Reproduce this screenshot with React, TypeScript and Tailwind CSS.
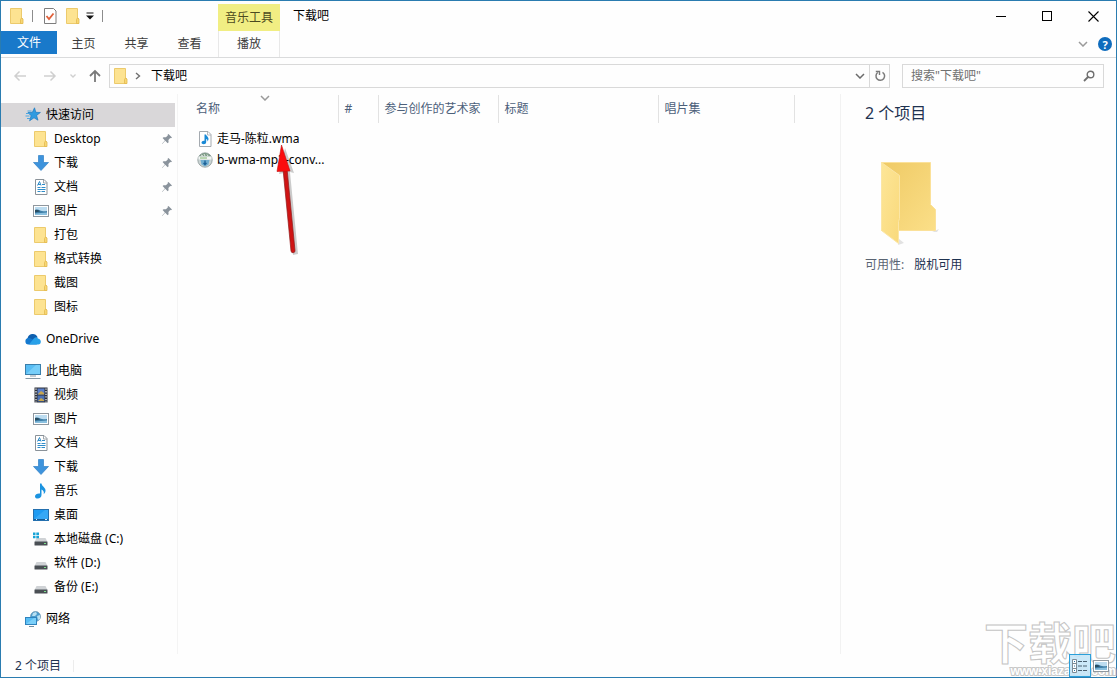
import type { ReactNode } from "react";
import { clsx } from "clsx";

type IconProps = { className?: string };

function FolderIcon({ className }: IconProps) {
  return (
    <svg viewBox="0 0 16 16" className={clsx("size-4 shrink-0", className)} aria-hidden="true">
      <path d="M1.500.5h11v10h1v5h-12z" fill="#fde391" stroke="#ecca6c" />
      <path d="M11.500 15.500v-4l1-1.500 1.500 1v4.500z" fill="#f7d774" stroke="#e3b94f" strokeWidth=".8" />
    </svg>
  );
}

function StarIcon() {
  return (
    <svg viewBox="0 0 16 16" className="size-4 shrink-0" aria-hidden="true">
      <path
        d="M9.500.8l1.300 4.500 4.600.2-3.800 2.900 1.400 4.800-4-2.400-4.400 3 1.500-5L3 5.500l4.400-.2z"
        fill="#2f9be0"
        stroke="#1b7ac2"
        strokeWidth=".7"
      />
      <path d="M2.500 4h4M1 6.500h4M.5 9h4M2 11.500h3" stroke="#3fa2e2" strokeWidth=".9" />
    </svg>
  );
}

function DownloadIcon() {
  return (
    <svg viewBox="0 0 16 16" className="size-4 shrink-0" aria-hidden="true">
      <path d="M5.500.5h5v7h5L8 15.500.5 7.500h5z" fill="#3d93dc" stroke="#2f7fc6" strokeWidth=".7" />
    </svg>
  );
}

function DocumentIcon() {
  return (
    <svg viewBox="0 0 16 16" className="size-4 shrink-0" aria-hidden="true">
      <path d="M2.500.5h8.500l3 3v12H2.500z" fill="#fff" stroke="#8a9299" />
      <path d="M10.500.5v3.500H14" fill="none" stroke="#8a9299" strokeWidth=".8" />
      <path
        d="M4.500 6.500l2-4 1.500 4M5 5.500h3M9 5.500h3M4.500 8.500h3M8.500 8.500h4M4.500 10.500h8M4.500 12.500h3M8.500 12.500h3.500"
        fill="none"
        stroke="#2f8cc9"
      />
    </svg>
  );
}

function PictureIcon() {
  return (
    <svg viewBox="0 0 16 16" className="size-4 shrink-0" aria-hidden="true">
      <rect x=".5" y="2.500" width="15" height="11" fill="#fff" stroke="#8f979e" />
      <rect x="2" y="4" width="12" height="8" fill="#bcdcf0" />
      <path d="M2 7c3-1.500 5 .5 7 1s3 .3 5 0v4H2z" fill="#3f7fa8" />
      <path d="M2 7c2-.8 4 .2 5 1.500L2 9.500z" fill="#284d62" />
      <path d="M2 10.500l12-1V12H2z" fill="#8ac0df" />
    </svg>
  );
}

function OneDriveIcon() {
  return (
    <svg viewBox="0 0 16 16" className="size-4 shrink-0" aria-hidden="true">
      <path d="M2.500 7.500A5.300 5.300 0 0 1 12.500 6l-2 5h-8z" fill="#0f5fae" />
      <path d="M3.300 13.500A3.300 3.300 0 0 1 3 7c1.700-.2 3.500.5 5 1.600l4 4.900z" fill="#1479cf" />
      <path d="M8 8.600C9 6.500 11.500 5 13 7.500c4 .7 3.500 6 .2 6H4z" fill="#28a0e8" />
    </svg>
  );
}

function ComputerIcon() {
  return (
    <svg viewBox="0 0 16 16" className="size-4 shrink-0" aria-hidden="true">
      <rect x=".5" y="1.500" width="15" height="10" fill="#58bdf4" stroke="#3a7eaa" />
      <path d="M1 11L11 2h4v9z" fill="#8bd8fb" opacity=".6" />
      <path d="M5 13h6" stroke="#8b9ba5" />
      <path d="M.5 15.500h15" stroke="#8599a6" />
    </svg>
  );
}

function VideoIcon() {
  return (
    <svg viewBox="0 0 16 16" className="size-4 shrink-0" aria-hidden="true">
      <rect x="1.500" y=".5" width="13" height="15" fill="#2b2f38" />
      <rect x="4.500" y="1.500" width="7" height="6" fill="#5a7fc9" />
      <rect x="4.500" y="8.500" width="7" height="6" fill="#4a70b5" />
      <path d="M5 7l3-3 3 2v1.500H5zM5 14l3-3 3 2v1H5z" fill="#c8a64d" />
      <path d="M3 1.500v14M13 1.500v14" stroke="#e8ebef" strokeWidth="1.300" strokeDasharray="1.300 1.300" />
    </svg>
  );
}

function MusicIcon() {
  return (
    <svg viewBox="0 0 16 16" className="size-4 shrink-0" aria-hidden="true">
      <path
        d="M7 .5h1.500c.3 3 4.500 4 4 7.500-.2 1.500-1 2.500-1.800 3.200.6-2.500-.4-4-2.200-4.700V12c0 2-1.800 3.500-3.700 3.500S2 14.600 2 13.200C2 11.500 4.500 10 7 10.500z"
        fill="#1b93e0"
      />
    </svg>
  );
}

function DesktopIcon() {
  return (
    <svg viewBox="0 0 16 16" className="size-4 shrink-0" aria-hidden="true">
      <rect x=".5" y="2.500" width="15" height="11" fill="#1e9bf2" stroke="#236fae" />
      <path d="M1 12L12 3h3v9z" fill="#46b1f8" opacity=".6" />
      <path d="M1 12.500h14" stroke="#155b96" />
      <path d="M3 12.500h1M12 12.500h2" stroke="#d7ecfb" />
    </svg>
  );
}

function DriveIcon({ system = false }: { system?: boolean }) {
  return (
    <svg viewBox="0 0 16 16" className="size-4 shrink-0" aria-hidden="true">
      <path d="M3.500 7h9l2 4H1.500z" fill="#cfd2d5" />
      <rect x="1.500" y="10.500" width="13" height="4" rx=".5" fill="#4a4f54" />
      <path d="M2 10.500h12" stroke="#8d9297" strokeWidth=".7" />
      <rect x="11" y="12" width="2" height="1" fill="#7be08a" />
      {system && (
        <path d="M0 1.500h2.500V4H0zM3.300 1.500H6V4H3.300zM0 4.800h2.500v2.500H0zM3.300 4.800H6v2.500H3.300z" fill="#17a3d6" />
      )}
    </svg>
  );
}

function NetworkIcon() {
  return (
    <svg viewBox="0 0 16 16" className="size-4 shrink-0" aria-hidden="true">
      <circle cx="10.500" cy="5.500" r="5" fill="#4c9ccc" stroke="#6d94ad" strokeWidth=".7" />
      <path d="M8 2l3-1 1 2-2 2-3 0zM12 5l3-1v4l-2 1z" fill="#b9e0f2" />
      <rect x=".5" y="6.500" width="11" height="7" fill="#58bdf4" stroke="#2f83bd" />
      <path d="M1 13l8-6h2v6z" fill="#91dafb" opacity=".6" />
      <path d="M4 15.500h5" stroke="#6f8da0" />
    </svg>
  );
}

function PinIcon() {
  return (
    <svg viewBox="0 0 12 12" className="ml-auto size-3 shrink-0" aria-hidden="true">
      <path
        d="M7.500 1L11 4.500l-1 .8-.8-.2-1.800 1.900.2 2.300-.9.9-2.500-2.400L1.500 10.800l-.6.3.3-.7 2.700-2.900L1.600 5l.9-.8 2.400.1 1.900-1.800-.2-.8z"
        fill="#8a939c"
      />
    </svg>
  );
}

function AudioFileIcon() {
  return (
    <svg viewBox="0 0 16 16" className="size-4 shrink-0" aria-hidden="true">
      <path d="M2.500.5h8.500l3 3v12H2.500z" fill="#fff" stroke="#a4aab0" />
      <path d="M10.500.5v3.500H14" fill="none" stroke="#a4aab0" strokeWidth=".8" />
      <path
        d="M7.500 3.500H9c.2 1.700 2.800 2.300 2.500 4.800-.1.900-.6 1.700-1.100 2.100.2-1.300-.2-2-1.200-2.400v3c0 1.300-1.200 2.300-2.500 2.300s-2.200-.7-2.200-1.700c0-1.200 1.500-2.100 3-1.800z"
        fill="#1889d6"
      />
    </svg>
  );
}

function InstallerIcon() {
  return (
    <svg viewBox="0 0 16 16" className="size-4 shrink-0" aria-hidden="true">
      <circle cx="8" cy="8" r="7.200" fill="#c9d3d3" stroke="#8b9898" strokeWidth=".8" />
      <path d="M2 4.500A7 7 0 0 1 14 4.500z" fill="#7c9a86" />
      <path d="M4 3l2 1M7 2l1 2M10 2.500l1 1.500" stroke="#e5ece4" />
      <rect x="1.500" y="4.500" width="13" height="3" fill="#f2f5f3" />
      <path d="M3 6h7" stroke="#7eb56e" />
      <path d="M3.500 8h9l-1 4.500-3.500 2-3.500-2z" fill="#70add0" />
      <path d="M8 8.500v4M6.500 11L8 12.500 9.500 11" fill="none" stroke="#1a5f96" strokeWidth="1.300" />
    </svg>
  );
}

function Chevron({ className }: IconProps) {
  return (
    <svg viewBox="0 0 10 6" className={clsx("h-1.5 w-2.5 shrink-0", className)} aria-hidden="true">
      <path d="M1 1l4 4 4-4" fill="none" stroke="currentColor" strokeWidth="1.500" />
    </svg>
  );
}

type NavItem = { label: string; icon: ReactNode; pinned?: boolean };
type NavGroup = { label: string; icon: ReactNode; active?: boolean; items: NavItem[] };

const NAV: NavGroup[] = [
  {
    label: "快速访问",
    icon: <StarIcon />,
    active: true,
    items: [
      { label: "Desktop", icon: <FolderIcon />, pinned: true },
      { label: "下载", icon: <DownloadIcon />, pinned: true },
      { label: "文档", icon: <DocumentIcon />, pinned: true },
      { label: "图片", icon: <PictureIcon />, pinned: true },
      { label: "打包", icon: <FolderIcon /> },
      { label: "格式转换", icon: <FolderIcon /> },
      { label: "截图", icon: <FolderIcon /> },
      { label: "图标", icon: <FolderIcon /> },
    ],
  },
  { label: "OneDrive", icon: <OneDriveIcon />, items: [] },
  {
    label: "此电脑",
    icon: <ComputerIcon />,
    items: [
      { label: "视频", icon: <VideoIcon /> },
      { label: "图片", icon: <PictureIcon /> },
      { label: "文档", icon: <DocumentIcon /> },
      { label: "下载", icon: <DownloadIcon /> },
      { label: "音乐", icon: <MusicIcon /> },
      { label: "桌面", icon: <DesktopIcon /> },
      { label: "本地磁盘 (C:)", icon: <DriveIcon system /> },
      { label: "软件 (D:)", icon: <DriveIcon /> },
      { label: "备份 (E:)", icon: <DriveIcon /> },
    ],
  },
  { label: "网络", icon: <NetworkIcon />, items: [] },
];

const COLUMNS = [
  { label: "名称", width: "w-[148px]" },
  { label: "#", width: "w-10" },
  { label: "参与创作的艺术家", width: "w-[120px]" },
  { label: "标题", width: "w-40" },
  { label: "唱片集", width: "w-[136px]" },
];

const FILES = [
  { name: "走马-陈粒.wma", icon: <AudioFileIcon /> },
  { name: "b-wma-mp3-conv...", icon: <InstallerIcon /> },
];

function TitleBar() {
  return (
    <div className="flex h-[30px]">
      <div className="flex w-[217px] items-center pl-2">
        <FolderIcon />
        <span className="ml-[7px] h-3 w-px bg-[#8c8c8c]" />
        <button aria-label="属性" className="ml-2.5">
          <svg viewBox="0 0 14 16" className="h-4 w-3.5" aria-hidden="true">
            <path d="M1.500.5h9l2.500 2.500v12.500H1.500z" fill="#fff" stroke="#7d7d7d" />
            <path d="M3.500 8l2.500 3 4.500-5.500" fill="none" stroke="#e0603a" strokeWidth="1.800" />
          </svg>
        </button>
        <button aria-label="新建文件夹" className="ml-2">
          <FolderIcon />
        </button>
        <button aria-label="自定义快速访问工具栏" className="ml-[5px]">
          <svg viewBox="0 0 8 8" className="size-2" aria-hidden="true">
            <path d="M.5 1h7" stroke="#111" />
            <path d="M0 3.500h8L4 7.500z" fill="#111" />
          </svg>
        </button>
        <span className="ml-2 h-3 w-px bg-[#8c8c8c]" />
      </div>
      <div className="mt-[3px] w-[62px] bg-[#f1ee83] text-center leading-7 text-[#4c4a20]">音乐工具</div>
      <h1 className="ml-[13px] leading-[30px]">下载吧</h1>
      <div className="ml-auto flex">
        <button aria-label="最小化" className="grid w-[46px] place-items-center">
          <span className="h-px w-2.5 bg-black" />
        </button>
        <button aria-label="最大化" className="grid w-[46px] place-items-center">
          <span className="size-2.5 border border-black" />
        </button>
        <button aria-label="关闭" className="grid w-[46px] place-items-center">
          <svg viewBox="0 0 11 11" className="size-[11px]" aria-hidden="true">
            <path d="M.5.5l10 10M10.500.5l-10 10" stroke="#000" strokeWidth="1.100" />
          </svg>
        </button>
      </div>
    </div>
  );
}

function RibbonTabs() {
  return (
    <div className="flex h-[27px] items-start border-b border-[#dadbdc] text-[#3c3c3c]">
      <button className="h-[23px] w-14 bg-[#1979ca] text-white">文件</button>
      {["主页", "共享", "查看"].map((tab) => (
        <button key={tab} className="h-[26px] w-[53px]">
          {tab}
        </button>
      ))}
      <button className="ml-0.5 h-[26px] w-[62px] border-x border-[#e8e8e8]">播放</button>
      <div className="ml-auto flex h-[26px] items-center gap-2.5 pr-1">
        <button aria-label="展开功能区" className="text-[#9a9a9a]">
          <Chevron />
        </button>
        <button
          aria-label="帮助"
          className="grid size-3.5 place-items-center rounded-full bg-[#0f6cbd] text-[11px] leading-none font-bold text-white"
        >
          ?
        </button>
      </div>
    </div>
  );
}

function AddressBar() {
  return (
    <div className="flex items-center px-3 py-1.5">
      <button aria-label="后退" className="text-[#cfcfcf]">
        <svg viewBox="0 0 14 12" className="h-3 w-3.5" aria-hidden="true">
          <path d="M13 6H2M6.500 1.500L2 6l4.500 4.500" fill="none" stroke="currentColor" strokeWidth="1.500" />
        </svg>
      </button>
      <button aria-label="前进" className="ml-4 text-[#cfcfcf]">
        <svg viewBox="0 0 14 12" className="h-3 w-3.5" aria-hidden="true">
          <path d="M1 6h11M7.500 1.500L12 6l-4.500 4.500" fill="none" stroke="currentColor" strokeWidth="1.500" />
        </svg>
      </button>
      <button aria-label="最近浏览的位置" className="ml-3 text-[#cfcfcf]">
        <svg viewBox="0 0 8 6" className="h-1.5 w-2" aria-hidden="true">
          <path d="M1.500 1.500L4 4l2.500-2.500" fill="none" stroke="currentColor" strokeWidth="1.300" />
        </svg>
      </button>
      <button aria-label="上移" className="ml-3 text-[#7a7a7a]">
        <svg viewBox="0 0 12 14" className="h-3.5 w-3" aria-hidden="true">
          <path d="M6 13V2M1 7l5-5 5 5" fill="none" stroke="currentColor" strokeWidth="1.800" />
        </svg>
      </button>
      <div className="ml-2 flex h-6 min-w-0 flex-1 items-center border border-[#d9d9d9]">
        <FolderIcon className="ml-[3px]" />
        <svg viewBox="0 0 6 8" className="ml-1.5 h-2 w-1.5" aria-hidden="true">
          <path d="M1 1l3.500 3L1 7" fill="none" stroke="#6f6f6f" strokeWidth="1.400" />
        </svg>
        <button className="ml-2.5">下载吧</button>
        <button aria-label="以前的位置" className="mr-1 ml-auto text-[#6b6b6b]">
          <Chevron />
        </button>
        <button aria-label="刷新" className="grid h-full w-5 place-items-center border-l border-[#d9d9d9]">
          <svg viewBox="0 0 12 12" className="size-3" aria-hidden="true">
            <path d="M8.500 2.300A4.300 4.300 0 1 1 3.800 2.500" fill="none" stroke="#7b7b7b" strokeWidth="1.500" />
            <path d="M1.800 1.500h3.700V5" fill="none" stroke="#7b7b7b" strokeWidth="1.400" />
          </svg>
        </button>
      </div>
      <div className="ml-3 flex h-6 w-[202px] items-center border border-[#d9d9d9] px-2">
        <input
          type="text"
          aria-label="搜索"
          placeholder={'搜索"下载吧"'}
          className="min-w-0 flex-1 outline-none placeholder:text-[#707070]"
        />
        <svg viewBox="0 0 12 12" className="size-3" aria-hidden="true">
          <circle cx="7.500" cy="4.500" r="3.300" fill="none" stroke="#6f6f6f" strokeWidth="1.400" />
          <path d="M5 7L1 11" stroke="#6f6f6f" strokeWidth="1.800" />
        </svg>
      </div>
    </div>
  );
}

function Sidebar() {
  return (
    <nav className="flex w-[177px] shrink-0 flex-col gap-2 border-r border-[#f4f4f4] pt-[9px] pr-0.5">
      {NAV.map((group) => (
        <div key={group.label}>
          <a href="#" className={clsx("flex h-6 items-center gap-[5px] pl-6", group.active && "bg-[#d9d7d9]")}>
            {group.icon}
            {group.label}
          </a>
          {group.items.map((item) => (
            <a key={item.label} href="#" className="flex h-6 items-center gap-[5px] pr-0.5 pl-8">
              {item.icon}
              {item.label}
              {item.pinned && <PinIcon />}
            </a>
          ))}
        </div>
      ))}
    </nav>
  );
}

function FileList() {
  return (
    <main className="relative min-w-0 flex-1 pt-px pl-3">
      <table className="table-fixed border-collapse text-left">
        <thead>
          <tr className="h-7 text-[#4c607a]">
            {COLUMNS.map((col) => (
              <th key={col.label} className={clsx("border-r border-[#e2e2e2] p-0 pl-1.5 font-normal", col.width)}>
                {col.label}
              </th>
            ))}
          </tr>
        </thead>
        <tbody>
          <tr className="h-[5px]" />
          {FILES.map((file) => (
            <tr key={file.name} className="h-[21px]">
              <td colSpan={COLUMNS.length} className="p-0 pl-[7px]">
                <span className="flex items-center gap-1">
                  {file.icon}
                  {file.name}
                </span>
              </td>
            </tr>
          ))}
        </tbody>
      </table>
      <Chevron className="absolute top-px left-[82px] text-[#9a9a9a]" />
      {/* red pointer over the first file */}
      <svg viewBox="0 0 30 116" className="absolute top-[50px] left-[95px] h-[116px] w-[30px]" aria-hidden="true">
        <g opacity=".2" transform="translate(3 2)">
          <path d="M9 2l9 25-4-1 8 82-5 1-9-82-5 1z" fill="#000" />
        </g>
        <path d="M10 25l4-.5 8 82a1.500 1.500 0 0 1-4 .5z" fill="#cf1414" stroke="#8f1a1a" strokeWidth=".7" />
        <path d="M8.500 1l8.500 26-13 .5z" fill="#fb0d0d" stroke="#c01010" strokeWidth=".6" />
      </svg>
    </main>
  );
}

function DetailsPane() {
  return (
    <aside className="w-[276px] shrink-0 border-l border-[#f2f2f2] pt-[7px] pl-6 text-[#1e3250]">
      <h2 className="text-base leading-6">2 个项目</h2>
      <svg viewBox="0 0 60 86" className="mt-9 ml-[15px] h-[86px] w-[60px]" aria-hidden="true">
        <defs>
          <linearGradient id="back" x1="0" y1="0" x2="1" y2="1">
            <stop offset="0" stopColor="#efca65" />
            <stop offset="1" stopColor="#fbdf88" />
          </linearGradient>
          <linearGradient id="front" x1="0" y1="0" x2="1" y2="1">
            <stop offset="0" stopColor="#fde698" />
            <stop offset="1" stopColor="#f9d97b" />
          </linearGradient>
        </defs>
        <path d="M52 71l7-3-2 3zM18 84l6-2-5-4z" fill="#e2e2e2" />
        <path d="M1.500 1.500h49v42l5 5v21h-54z" fill="url(#back)" stroke="#fbe19a" />
        <path d="M1.500 1.500l18 13v43l-1 3v22l-17-13z" fill="url(#front)" stroke="#fbe6a6" />
      </svg>
      <dl className="mt-1.5 flex gap-2.5 leading-6">
        <dt className="text-[#5a6472]">可用性:</dt>
        <dd>脱机可用</dd>
      </dl>
    </aside>
  );
}

function StatusBar() {
  return (
    <footer className="relative flex h-[23px] items-center pl-3.5 text-[#1e3250]">
      <span>2 个项目</span>
      <span className="ml-3 h-3 w-px bg-[#ececec]" />
      <div
        aria-hidden="true"
        className="pointer-events-none absolute right-0 bottom-0 text-right font-bold whitespace-nowrap text-white"
      >
        <div className="text-[44px] leading-[44px] [-webkit-text-stroke:1px_#c4c4c4]">下载吧</div>
        <div className="font-['Liberation_Sans',sans-serif] text-xs leading-3 [-webkit-text-stroke:2px_#c8c8c8] [paint-order:stroke]">
          www.xiazaiba.com
        </div>
      </div>
      <button
        aria-label="详细信息"
        className="relative ml-auto grid h-[23px] w-[22px] place-items-center border border-[#2ba0da] bg-[#c5e6f7]/90"
      >
        <svg viewBox="0 0 16 14" className="h-3.5 w-4" aria-hidden="true">
          <path d="M.5.500h4v13h-4zM.5 4.500h4M.5 9.500h4" fill="#fff" stroke="#7c8b96" />
          <path d="M2 2.500h1M2 7h1M2 11.500h1" stroke="#2878a8" />
          <path d="M6 2.500h4M11 2.500h4M6 7h4M11 7h4M6 11.500h4M11 11.500h4" stroke="#4a6070" />
        </svg>
      </button>
      <button aria-label="大图标" className="relative mr-[5px] grid h-[23px] w-5 place-items-center">
        <PictureIcon />
      </button>
    </footer>
  );
}

export default function App() {
  return (
    <div className="flex min-h-screen flex-col border border-[#2a7cb0] bg-[#fefefe] font-['Noto_Sans','Noto_Sans_CJK_SC',sans-serif] text-xs text-black">
      <header>
        <TitleBar />
        <RibbonTabs />
        <AddressBar />
      </header>
      <div className="flex flex-1">
        <Sidebar />
        <FileList />
        <DetailsPane />
      </div>
      <StatusBar />
    </div>
  );
}
